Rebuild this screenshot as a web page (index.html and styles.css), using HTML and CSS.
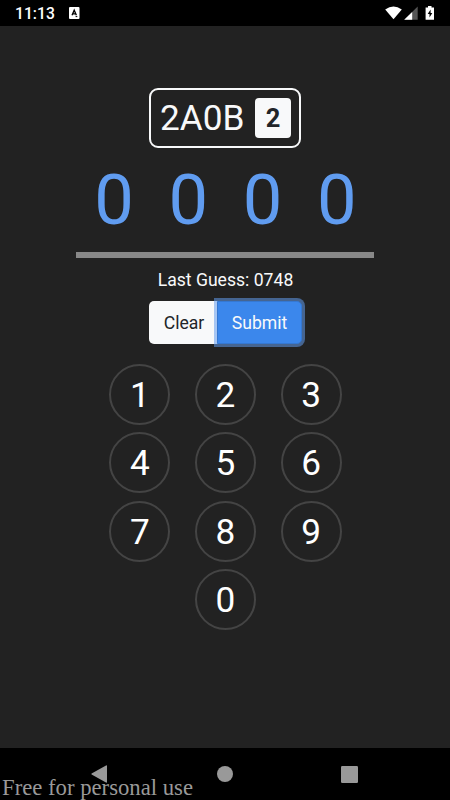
FILE: index.html
```html
<!DOCTYPE html>
<html lang="en">
<head>
<meta charset="utf-8">
<title>Guess the number</title>
<link rel="stylesheet" href="styles.css">
</head>
<body>
<header class="status">
  <span class="clock">11:13</span>
  <svg class="app-icon" width="11" height="12" viewBox="0 0 11 12"><rect width="10.5" height="12" rx="1" fill="#fff"/><path d="M3 8.3 5.2 3.2 7.4 8.3M3.9 6.8h2.7" fill="none" stroke="#000" stroke-width="1.3"/><path d="M6.6 9.6h1.7" stroke="#000"/></svg>
  <svg class="system" width="52" height="16" viewBox="0 0 52 16">
    <path d="M0.2 3.5Q8.5-2.5 16.8 3.5L8.5 13.3Z" fill="#fff"/>
    <path d="M32.7 0.5V13.7H19.2Z" fill="#555"/><path d="M27.2 6V13.7H19.2Z" fill="#fff"/>
    <path d="M43 0h3.5v1.5H49V13.7H40.6V1.5H43Z" fill="#fff"/>
    <path d="M45.6 3.6 42.7 8H44.5V11.5L47.3 7H45.6Z" fill="#000"/>
  </svg>
</header>
<main class="game">
  <div class="score"><span class="result">2A0B</span><span class="count">2</span></div>
  <div class="digits"><span>0</span><span>0</span><span>0</span><span>0</span></div>
  <p class="last">Last Guess: 0748</p>
  <div class="actions"><button class="btn clear">Clear</button><button class="btn submit">Submit</button></div>
  <div class="keypad">
    <button>1</button><button>2</button><button>3</button>
    <button>4</button><button>5</button><button>6</button>
    <button>7</button><button>8</button><button>9</button>
    <button class="zero">0</button>
  </div>
</main>
<footer class="nav">
  <svg width="16" height="18" viewBox="0 0 16 18"><path d="M15 0.5Q16 0 16 1V17Q16 18 15 17.5L0.6 9.5Q0 9 0.6 8.5Z" fill="#999"/></svg>
  <svg width="16" height="16" viewBox="0 0 16 16"><circle cx="8" cy="8" r="8" fill="#999"/></svg>
  <svg width="17" height="17" viewBox="0 0 17 17"><rect width="17" height="17" rx="1.2" fill="#999"/></svg>
  <span class="watermark">Free for personal use</span>
</footer>
</body>
</html>
```
FILE: styles.css
```css
* { box-sizing: border-box; }
body {
  margin: 0;
  height: 800px;
  display: flex;
  flex-direction: column;
  overflow: hidden;
  background: #222;
  color: #fff;
  font-family: Roboto, sans-serif;
}
button { font-family: inherit; margin: 0; padding: 0; }
.status {
  height: 26px;
  display: flex;
  align-items: flex-start;
  padding: 0 13px 0 15px;
  background: #000;
}
.clock { width: 54px; font-size: 15.7px; line-height: 28px; font-weight: 500; }
.app-icon { margin-top: 7px; }
.system { margin: 6px 0 0 auto; }
.game {
  height: 722px;
  display: flex;
  flex-direction: column;
  align-items: center;
  padding: 62px 0 0 1px;
}
.score {
  width: 152px;
  height: 60px;
  display: flex;
  align-items: center;
  justify-content: space-between;
  margin-right: 1px;
  padding: 0 8px 0 9px;
  border: 2px solid #f8f9fa;
  border-radius: 9px;
}
.result { font-size: 35.2px; line-height: 56px; color: #f8f9fa; }
.count {
  width: 36px;
  height: 40px;
  border-radius: 4px;
  background: #f8f9fa;
  color: #212529;
  font-size: 25.5px;
  font-weight: 700;
  line-height: 40px;
  text-align: center;
}
.digits {
  width: 298px;
  height: 110px;
  display: grid;
  grid-template-columns: repeat(4, 1fr);
  margin-right: 1px;
  padding-left: 1px;
  border-bottom: 6px solid #888;
  color: #609cf0;
  font-size: 70.5px;
  line-height: 105px;
  text-align: center;
}
.last { margin: 9px 0 0; height: 24px; font-size: 17.6px; line-height: 26px; color: #f8f9fa; }
.actions { display: flex; height: 43px; margin-top: 10px; }
.btn { border: 0; font-size: 17.6px; line-height: 43px; }
.clear { width: 69px; padding: 1px 0 0 1px; border-radius: 5px 0 0 5px; background: #f8f9fa; color: #212529; }
.submit {
  width: 85px;
  margin-left: -1px;
  padding-top: 1px;
  border-radius: 0 5px 5px 0;
  background: #3b87ec;
  border: 1px solid #3578d2;
  line-height: 41px;
  color: #f8f9fa;
  box-shadow: 0 0 0 3px rgba(98, 156, 238, .55);
}
.keypad {
  display: grid;
  grid-template-columns: repeat(3, 61px);
  gap: 7.3px 24.6px;
  margin-top: 20px;
}
.keypad button {
  width: 61px;
  height: 61px;
  border: 2px solid #444;
  border-radius: 50%;
  background: transparent;
  color: #fff;
  font-size: 35.2px;
  line-height: 59px;
}
.keypad .zero { grid-column: 2; }
.nav {
  position: relative;
  height: 52px;
  display: flex;
  align-items: center;
  justify-content: space-between;
  padding: 0 92px 0 91px;
  background: #000;
}
.nav svg:nth-child(2) { margin-left: 2px; }
.watermark {
  position: absolute;
  left: 2px;
  bottom: 0;
  color: #999;
  font-family: "Liberation Serif", serif;
  font-size: 24px;
  line-height: 25px;
  white-space: nowrap;
  transform: scaleX(.946);
  transform-origin: left;
}
```
